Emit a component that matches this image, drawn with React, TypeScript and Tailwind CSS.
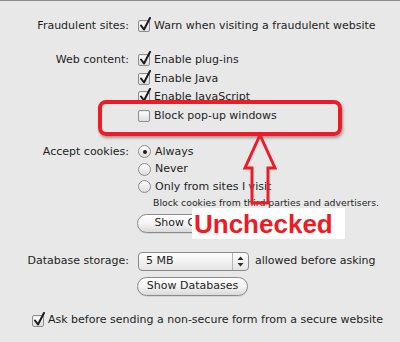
import React from 'react';

const font = { fontFamily: '"DejaVu Sans", "Liberation Sans", sans-serif' };

const Check = ({ checked }: { checked: boolean }) => (
  <span className="relative mr-[4px] inline-block h-[12px] w-[12px] shrink-0 rounded-[2px] border border-[#8d8d8d] bg-gradient-to-b from-white to-[#dedede] shadow-[inset_0_1px_1px_rgba(0,0,0,0.08)]">
    {checked && (
      <svg className="absolute -top-[4px] left-[0px]" width="13" height="15" viewBox="0 0 13 15">
        <path d="M2 8.5 L5 12.5 L11 1" fill="none" stroke="#1a1a1a" strokeWidth="2" strokeLinecap="round" strokeLinejoin="round" />
      </svg>
    )}
  </span>
);

const Radio = ({ on }: { on?: boolean }) => (
  <span className="mr-[4px] flex h-[13px] w-[13px] shrink-0 items-center justify-center rounded-full border border-[#8d8d8d] bg-gradient-to-b from-white to-[#dcdcdc]">
    {on && <span className="h-[4px] w-[4px] rounded-full bg-[#1c1c1c]" />}
  </span>
);

const Row = ({ label, children, h = 'h-[18.5px]' }: { label?: string; children: React.ReactNode; h?: string }) => (
  <div className={`flex items-center ${h}`}>
    <div className="w-[130px] shrink-0 pr-[1px] text-right">{label}</div>
    <div className="ml-[8px] flex items-center">{children}</div>
  </div>
);

const Pill = ({ children }: { children: React.ReactNode }) => (
  <div className="flex h-[19px] w-[111px] items-center justify-center rounded-full border border-[#8a8a8a] bg-gradient-to-b from-white via-[#f4f4f4] to-[#dadada] text-[11px] shadow-[0_1px_0_rgba(0,0,0,0.08)]">
    {children}
  </div>
);

export default function App() {
  return (
    <div className="relative h-[342px] w-[400px] overflow-hidden border-t border-[#8c8c8c] bg-[#e8e8e8] text-[11px] text-[#1e1e1e]" style={font}>
      <div className="pt-[16px]">
        <Row label="Fraudulent sites:">
          <Check checked />
          <span>Warn when visiting a fraudulent website</span>
        </Row>

        <div className="mt-[15.5px]">
          <Row label="Web content:">
            <Check checked />
            <span>Enable plug-ins</span>
          </Row>
          <Row>
            <Check checked />
            <span>Enable Java</span>
          </Row>
          <Row>
            <Check checked />
            <span>Enable JavaScript</span>
          </Row>
          <Row>
            <Check checked={false} />
            <span>Block pop-up windows</span>
          </Row>
        </div>

        <div className="mt-[18px]">
          <Row label="Accept cookies:" h="h-[17.5px]">
            <Radio on />
            <span>Always</span>
          </Row>
          <Row h="h-[17.5px]">
            <Radio />
            <span>Never</span>
          </Row>
          <Row h="h-[17.5px]">
            <Radio />
            <span>Only from sites I visit</span>
          </Row>
          <Row h="h-[14px]">
            <span className="ml-[15px] text-[9.3px]">Block cookies from third parties and advertisers.</span>
          </Row>
          <div className="mt-[4px] flex">
            <div className="ml-[137px]">
              <Pill>Show Cookies</Pill>
            </div>
          </div>
        </div>

        <div className="mt-[19px]">
          <Row label="Database storage:" h="h-[20px]">
            <div className="flex h-[19px] w-[111px] items-center rounded-[4px] border border-[#8a8a8a] bg-gradient-to-b from-white to-[#e4e4e4]">
              <span className="flex-1 pl-[7px]">5 MB</span>
              <span className="flex h-full w-[16px] flex-col items-center justify-center border-l border-[#b5b5b5]">
                <svg width="7" height="11" viewBox="0 0 7 11">
                  <path d="M3.5 0.5 L6.5 4 L0.5 4 Z M3.5 10.5 L6.5 7 L0.5 7 Z" fill="#2a2a2a" />
                </svg>
              </span>
            </div>
            <span className="ml-[6px]">allowed before asking</span>
          </Row>
          <div className="mt-[5px] flex">
            <div className="ml-[137px]">
              <Pill>Show Databases</Pill>
            </div>
          </div>
        </div>

        <div className="ml-[32px] mt-[16px] flex h-[18px] items-center">
          <Check checked />
          <span>Ask before sending a non-secure form from a secure website</span>
        </div>
      </div>

      {/* annotation: red frame */}
      <div className="absolute left-[98px] top-[99px] h-[36px] w-[244px] rounded-[8px] border-[4px] border-[#ee1b24] shadow-[1px_2px_3px_rgba(0,0,0,0.35)]" />

      {/* annotation: arrow */}
      <svg className="absolute left-[240px] top-[128px]" width="42" height="80" viewBox="0 0 42 80">
        <path d="M20 6 L35 39 L28 39 L28 74 L12 74 L12 39 L5 39 Z" fill="none" stroke="#ee1b24" strokeWidth="3" strokeLinejoin="miter" />
      </svg>

      {/* annotation: label */}
      <div className="absolute left-[192px] top-[207px] flex h-[31px] w-[153px] items-center bg-white pl-[2px]">
        <span className="text-[26px] font-bold leading-none text-[#ee1b24]" style={{ fontFamily: '"Liberation Sans", Arial, sans-serif' }}>
          Unchecked
        </span>
      </div>
    </div>
  );
}
